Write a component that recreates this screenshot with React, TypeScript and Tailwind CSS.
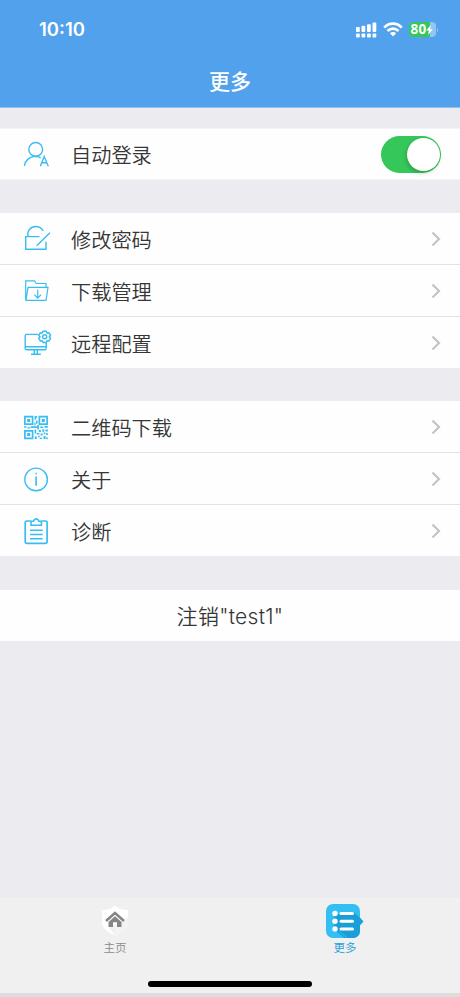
import type { ReactNode } from "react";

interface MenuRowProps {
  icon: ReactNode;
  label: string;
}

function Glyph({ children }: { children: ReactNode }) {
  return (
    <svg
      width="28"
      height="29"
      viewBox="0 0 28 29"
      fill="none"
      stroke="#38bdf3"
      strokeWidth="1.4"
      className="mt-[11px] shrink-0 self-start overflow-visible"
    >
      {children}
    </svg>
  );
}

function UserIcon() {
  return (
    <Glyph>
      <circle cx="13.7" cy="9.4" r="6.9" />
      <path d="M2.4 25.8C3.2 20.4 7.6 16.6 13 16.4c2.200 0 4 .4 5.700 1.400" />
      <path d="M18.400 26.200 22.200 16.500 26.300 26.200M19.700 22.800h5.200" />
    </Glyph>
  );
}

function PasswordIcon() {
  return (
    <Glyph>
      <path d="M17.400 12.600H3.700v12.600H24v-7.400" />
      <path d="M6.200 12.500C4.400 7.200 8.800 2.500 13.700 2.500c3.400 0 6 1.700 7.500 4.500M14.700 21.800 28 8.800" />
    </Glyph>
  );
}

function FolderIcon() {
  return (
    <Glyph>
      <path strokeWidth="1.200" d="M24 11V7.500H14.200L12.600 4.800H3.700v19.400M4 24.300 6 11.400h20l-2 12.900zM15.700 13.700V22M12.300 18.700l3.400 3.400 3.400-3.400" />
    </Glyph>
  );
}

function RemoteIcon() {
  return (
    <Glyph>
      <path d="M16.300 6.400H4.500Q3.200 6.400 3.200 7.700v12.800q0 1.300 1.300 1.300h18.400q1.300 0 1.300-1.300V15M3.200 18.700h21M12.300 22v4.200M15.300 22v4.200M9 26.300h9.800" />
      <path
        strokeWidth="1.500"
        strokeLinejoin="round"
        d="M21 3.300h3.300l.7 1.600 1.900-.2 1.600 2.700-1.200 1.400 1.200 1.500-1.600 2.700-1.900-.3-.7 1.700H21l-.8-1.700-1.800.3-1.600-2.700L18 8.800l-1.200-1.400 1.600-2.700 1.800.2z"
      />
      <circle cx="22.700" cy="8.800" r="2" />
    </Glyph>
  );
}

function QrIcon() {
  return (
    <Glyph>
      <path strokeWidth="1.700" d="M2.900 4.700h7.700v7.500H2.900zM17.400 4.700h7.700v7.500h-7.700zM2.900 18.800h7.700v7.500H2.900z" />
      <g fill="#38bdf3" stroke="none">
        <path d="M5.200 6.900h3v3h-3zM19.800 6.900h3v3h-3zM5.200 21h3v3h-3z" />
        <path d="M12.600 4h2.600v1.800h-1.100v2h-1.500zM14 8.600h1.600v3.200H14zM12.300 10.600h1.200v3h-1.200zM2.100 14.300h2.300v1.500H2.100zM5.300 15.200h3v1.400h-3zM8.700 14.300h6.600v1.800H8.700zM15.300 13h1.600v4.600h-1.600zM18.300 14.400h3v1.600h-3zM22.600 14h3.200v1.700h-3.200zM12.600 17.500h1.600v4h-1.600zM16.900 18h2v2h-2zM20.300 17.300h2v2.500h-2zM23.500 17.400h2.400v2h-2.400zM14.700 21h2.700v1.600h-2.700zM18.600 21.600h2v2h-2zM21.600 20.600h1.800v1.700h-1.800zM24 21.300h1.900v1.600H24zM12.800 24.500h2v2.600h-2zM16.200 23.800h1.600v1.500h-1.600zM17.700 25.700h2.500v1.400h-2.500zM21.600 24h2v2.900h-2zM24.200 25.500h1.700v1.600h-1.700z" />
      </g>
    </Glyph>
  );
}

function AboutIcon() {
  return (
    <Glyph>
      <circle cx="14.100" cy="15.400" r="11.300" />
      <path strokeWidth="1.600" d="M14.100 8.700v1.600M14.100 12.600v9.200" />
    </Glyph>
  );
}

function ClipboardIcon() {
  return (
    <Glyph>
      <path strokeWidth="1.700" d="M8.600 5H5Q3.200 5 3.200 6.800v18.700q0 1.900 1.800 1.900h18.300q1.800 0 1.800-1.900V6.800Q25.100 5 23.300 5h-3.500" />
      <path strokeWidth="1.600" d="M9 9.300V5.200h2.500Q12.200 2.900 14.200 2.900T16.900 5.200h2.500v4.100zM8 14.300h12.700M8 18.500h12.700M8 22.700h12.700" />
    </Glyph>
  );
}

function MenuRow({ icon, label }: MenuRowProps) {
  return (
    <button type="button" className="flex h-[51px] w-full items-center bg-[#fefefe] pr-[19px] pl-[22px] text-left">
      {icon}
      <span className="ml-[21px] flex-1 pt-[4px] text-[20.200px] leading-[30px]">{label}</span>
      <svg width="10" height="16" viewBox="0 0 10 16" fill="none" stroke="#c4c4c6" strokeWidth="2.200" className="mt-px">
        <path d="m1.500 1.500 6.500 6.500-6.500 6.500" />
      </svg>
    </button>
  );
}

function StatusBar() {
  return (
    <div className="flex h-[58px] items-center justify-between pr-[22px] pl-[39px]">
      <span className="pt-[2px] font-[Inter] text-[18.500px] font-semibold">10:10</span>
      <div className="flex items-center pt-px">
        <svg width="21" height="16" viewBox="0 0 21 16" fill="#fff">
          <rect x="0" y="5" width="3.800" height="5" rx="1" />
          <rect x="5.500" y="3.800" width="3.800" height="6.200" rx="1" />
          <rect x="11" y="2.200" width="3.800" height="7.800" rx="1" />
          <rect x="16.500" y="0.500" width="3.800" height="9.500" rx="1" />
          <rect x="0" y="11.500" width="3.800" height="4" rx="1" />
          <rect x="5.500" y="11.500" width="3.800" height="4" rx="1" />
          <rect x="11" y="11.500" width="3.800" height="4" rx="1" />
          <rect x="16.500" y="11.500" width="3.800" height="4" rx="1" />
        </svg>
        <svg width="20" height="15" viewBox="0 0 20 15" fill="none" stroke="#fff" strokeWidth="2.700" className="ml-[6px]">
          <path d="M1.200 5.600C6.200.4 13.800.4 18.800 5.600M4.500 9c3.200-3.200 7.800-3.200 11 0" />
          <path d="M6.900 11.200c1.800-1.500 4.400-1.500 6.200 0L10 14.400z" fill="#fff" stroke="none" />
        </svg>
        <div className="relative ml-[6px] flex h-[15px] w-[27px] items-center rounded-[4px] bg-[#91c5f2]">
          <div className="absolute inset-y-0 left-0 w-[21px] rounded-l-[4px] bg-[#35c759]" />
          <span className="relative ml-[2px] font-['Noto_Sans'] text-[13.500px] leading-[15px] font-bold tracking-[0.2px]">80</span>
          <svg width="7" height="10" viewBox="0 0 7 10" fill="#fff" className="relative shrink-0">
            <path d="M4.800 0 .3 5.600h2.500L2.100 10 6.700 4.200H4.200z" />
          </svg>
        </div>
        <span className="ml-px h-[4px] w-[1.500px] rounded-r bg-[#91c5f2]" />
      </div>
    </div>
  );
}

function TabBar() {
  return (
    <nav className="flex h-[95px] flex-col bg-[#f0f0f0]">
      <div className="grid h-[83px] grid-cols-2 text-[11.500px] leading-[18px]">
        <div className="flex flex-col items-center pt-[5px] text-[#8a8a8a]">
          <svg width="34" height="36" viewBox="0 0 34 36" fill="none">
            <path fill="#f3f3f3" d="M17 2.500c4 3.600 8 4.500 13 4.500v13c0 6-6 10-13 13z" />
            <path fill="#fff" d="M17 2.500C13 6 9 6.800 4 7v12c0 5.500 5.500 10.500 13 13.500l-5.500-7.500L30 14V7c-5 0-9-.9-13-4.500z" />
            <path stroke="#858585" strokeWidth="2.500" d="m8 18 9-8 9 8" />
            <path fill="#858585" d="m17 13.200 6.500 5.700v5H19v-4.600h-4v4.600h-4.500v-5z" />
          </svg>
          <span>主页</span>
        </div>
        <div className="flex flex-col items-center pt-[5px] text-[#1b9fd8]">
          <svg width="38" height="36" viewBox="0 0 38 36" fill="none">
            <rect x="0" y="1" width="34" height="34" rx="7" fill="#34bff3" />
            <path fill="#199ed8" d="M28.500 9.500 34 15v13a7 7 0 0 1-7 7H18.500L7 25.500l2-6-2-2 2-6z" />
            <path fill="#199ed8" d="m33.500 14 4 4.500-4 4.500z" />
            <path stroke="#34bff3" strokeWidth="1" d="m13 28 8 7" />
            <g fill="#fff">
              <circle cx="9" cy="10.500" r="2.700" />
              <circle cx="9" cy="18.200" r="2.700" />
              <circle cx="9" cy="25.900" r="2.700" />
            </g>
            <path stroke="#fff" strokeWidth="3" strokeLinecap="round" d="M15 10.500h11.500M15 18.200h11.500M15 25.900h11.500" />
          </svg>
          <span>更多</span>
        </div>
      </div>
      <div className="mx-auto h-[6px] w-[164px] rounded-full bg-black" />
    </nav>
  );
}

export default function App() {
  return (
    <div className="flex h-[997px] w-[460px] flex-col overflow-hidden bg-[#ebebf0] font-[Inter,'Noto_Sans_CJK_SC_DemiLight','Noto_Sans_CJK_SC',sans-serif] font-[350] text-[#363636]">
      <header className="h-[108px] border-b border-[#8fc2f0] bg-[#51a1ec] text-white">
        <StatusBar />
        <h1 className="pt-[7px] text-center font-['Noto_Sans_CJK_SC',sans-serif] text-[21px] leading-[30px] font-medium">更多</h1>
      </header>

      <main className="flex-1">
        <section className="mt-[20px] flex h-[52px] items-center border-y border-[#f5f5f7] bg-[#fefefe] pr-[19px] pl-[22px]">
          <UserIcon />
          <span className="ml-[21px] flex-1 pt-[4px] text-[20.200px] leading-[30px]">自动登录</span>
          <button type="button" role="switch" aria-checked="true" aria-label="自动登录" className="flex h-[37px] w-[60px] items-center justify-end rounded-full bg-[#36c75a] pr-[1.500px]">
            <span className="h-[33px] w-[33px] rounded-full bg-white shadow-[-1px_2px_4px_rgba(0,0,0,0.2)]" />
          </button>
        </section>

        <section className="mt-[33px] grid gap-px bg-[#e3e3e6]">
          <MenuRow icon={<PasswordIcon />} label="修改密码" />
          <MenuRow icon={<FolderIcon />} label="下载管理" />
          <MenuRow icon={<RemoteIcon />} label="远程配置" />
        </section>

        <section className="mt-[33px] grid gap-px bg-[#e3e3e6]">
          <MenuRow icon={<QrIcon />} label="二维码下载" />
          <MenuRow icon={<AboutIcon />} label="关于" />
          <MenuRow icon={<ClipboardIcon />} label="诊断" />
        </section>

        <button type="button" className="mt-[34px] h-[51px] w-full bg-[#fefefe] pt-[2px] text-[21px] tracking-[0.3px]">
          注销"test1"
        </button>
      </main>

      <TabBar />
      <div className="h-[4px] bg-[#dcdcdc]" />
    </div>
  );
}
